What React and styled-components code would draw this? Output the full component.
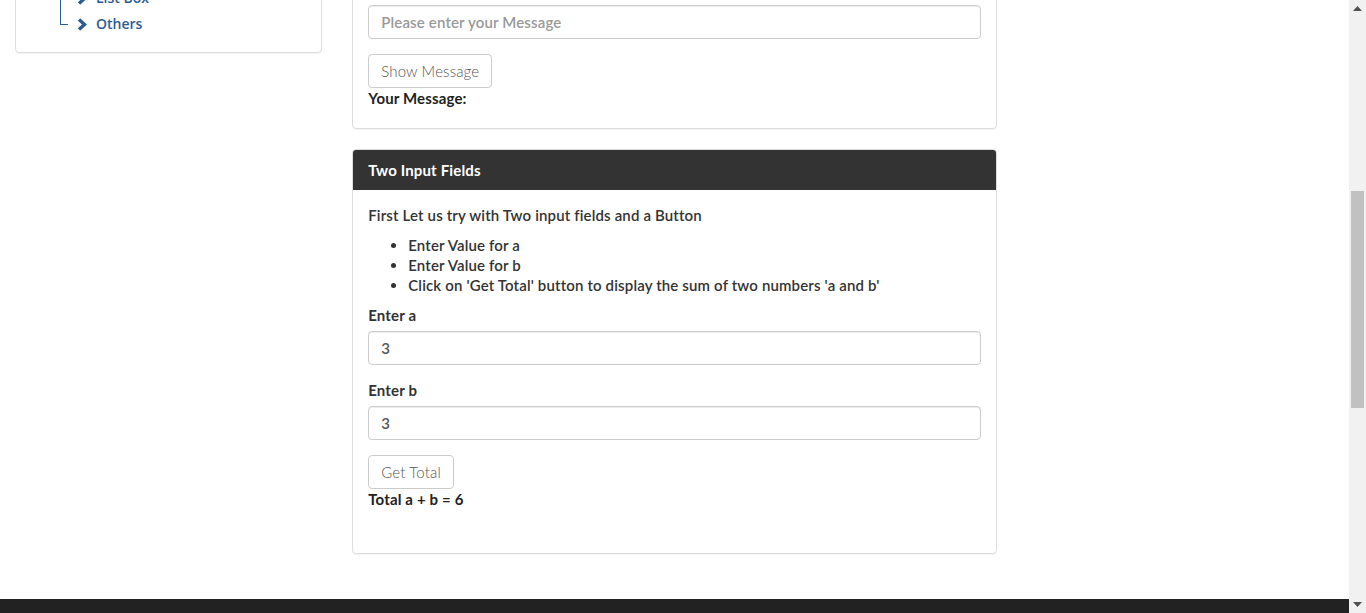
import React, { useLayoutEffect, useRef } from 'react';
import styled, { createGlobalStyle } from 'styled-components';

const GlobalStyle = createGlobalStyle`
  html, body {
    margin: 0;
    padding: 0;
    background: #ffffff;
  }
  body {
    margin-right: 17px;
    font-family: Lato, "Open Sans", sans-serif;
    font-size: 15px;
    letter-spacing: 0.15px;
    line-height: 20px;
    color: #333333;
  }
  * {
    box-sizing: border-box;
  }
`;

const treeItems = ['Input Forms', 'Date pickers', 'Table', 'List Box', 'Others'];

const steps = [
  'Enter Value for a',
  'Enter Value for b',
  "Click on 'Get Total' button to display the sum of two numbers 'a and b'",
];

const Chevron = () => (
  <svg width="10" height="13" viewBox="0 0 10 13">
    <path d="M2 1.5 L7.5 6.5 L2 11.5" fill="none" stroke="#2c5d92" strokeWidth="3.4" />
  </svg>
);

const Arrow = ({ down }) => (
  <svg width="9" height="5" viewBox="0 0 9 5">
    <polygon points={down ? '0,0 9,0 4.5,5' : '0,5 9,5 4.5,0'} fill="#505050" />
  </svg>
);

const App = () => {
  const anchorRef = useRef(null);

  // the shot is taken part way down the page, with the message input near the top
  useLayoutEffect(() => {
    if (anchorRef.current) {
      const top = anchorRef.current.getBoundingClientRect().top + window.scrollY;
      window.scrollTo(0, top - 5);
    }
  }, []);

  return (
    <>
      <GlobalStyle />
      <Header>
        <Brand>Selenium Easy</Brand>
        <PageTitle>Simple Form Demo</PageTitle>
      </Header>
      <Row>
        <Column>
          <SideCard>
            <Tree>
              {treeItems.map((item, i) => (
                <TreeItem key={item} $last={i === treeItems.length - 1}>
                  <Chevron />
                  <TreeLink>{item}</TreeLink>
                </TreeItem>
              ))}
            </Tree>
          </SideCard>
        </Column>
        <Column>
          <Panel>
            <PanelHeading>Single Input Field</PanelHeading>
            <PanelBody $bottom={20}>
              <Text>This would be your first example to start with Selenium.</Text>
              <FormGroup>
                <Label>Enter message</Label>
                <Input ref={anchorRef} type="text" placeholder="Please enter your Message" />
              </FormGroup>
              <Button>Show Message</Button>
              <Result>Your Message:</Result>
            </PanelBody>
          </Panel>
          <Panel>
            <PanelHeading>Two Input Fields</PanelHeading>
            <PanelBody $bottom={44}>
              <Text>First Let us try with Two input fields and a Button</Text>
              <Steps>
                {steps.map(s => (
                  <li key={s}>{s}</li>
                ))}
              </Steps>
              <FormGroup>
                <Label>Enter a</Label>
                <Input type="text" defaultValue="3" />
              </FormGroup>
              <FormGroup>
                <Label>Enter b</Label>
                <Input type="text" defaultValue="3" />
              </FormGroup>
              <Button>Get Total</Button>
              <Result>Total a + b = 6</Result>
            </PanelBody>
          </Panel>
        </Column>
        <Column />
      </Row>
      <Footer>
        <FooterText>© Selenium Easy</FooterText>
      </Footer>
      <ScrollTrack>
        <ScrollButton>
          <Arrow />
        </ScrollButton>
        <ScrollBody>
          <ScrollThumb />
        </ScrollBody>
        <ScrollButton>
          <Arrow down />
        </ScrollButton>
      </ScrollTrack>
    </>
  );
};

const Header = styled.header`
  height: 385px;
  padding: 20px 15px;
  border-bottom: 1px solid #eeeeee;
`;

const Brand = styled.div`
  font-size: 24px;
  line-height: 30px;
  font-weight: 700;
  color: #2c5d92;
`;

const PageTitle = styled.h1`
  margin: 40px 0 0;
  font-size: 28px;
  line-height: 34px;
  font-weight: 600;
`;

const Row = styled.div`
  display: grid;
  grid-template-columns: 3fr 6fr 3fr;
  padding-bottom: 25px;
`;

const Column = styled.div`
  padding: 0 15px;
  min-width: 0;
`;

const SideCard = styled.div`
  border: 1px solid #dddddd;
  border-radius: 4px;
  box-shadow: 0 1px 1px rgba(0, 0, 0, 0.05);
  padding: 13px 0 15px;
`;

const Tree = styled.ul`
  list-style: none;
  margin: 0 0 0 44px;
  padding: 0;
`;

const TreeItem = styled.li`
  position: relative;
  height: 26px;
  display: flex;
  align-items: center;
  gap: 9px;
  padding-left: 17px;

  &::before {
    content: '';
    position: absolute;
    left: 0;
    top: 0;
    height: ${p => (p.$last ? '13px' : '26px')};
    border-left: 1px solid #2c5d92;
  }

  &::after {
    content: '';
    position: absolute;
    left: 0;
    top: 13px;
    width: 8px;
    border-top: 1px solid #2c5d92;
  }
`;

const TreeLink = styled.a`
  font-family: "Open Sans", sans-serif;
  font-size: 14px;
  letter-spacing: 0;
  font-weight: 600;
  color: #2c5d92;
`;

const Panel = styled.div`
  border: 1px solid #dddddd;
  border-radius: 4px;
  box-shadow: 0 1px 1px rgba(0, 0, 0, 0.05);
  margin-bottom: 20px;
  overflow: hidden;
`;

const PanelHeading = styled.div`
  background: #333333;
  color: #ffffff;
  font-weight: 700;
  padding: 10px 15px;
  line-height: 20px;
`;

const PanelBody = styled.div`
  padding: 15px 15px ${p => p.$bottom}px;
`;

const Text = styled.p`
  margin: 0 0 10px;
  font-weight: 600;
`;

const Steps = styled.ul`
  margin: 0 0 10px;
  padding-left: 40px;
  font-weight: 600;
`;

const FormGroup = styled.div`
  margin-bottom: 15px;
`;

const Label = styled.label`
  display: block;
  margin-bottom: 6px;
  font-weight: 700;
`;

const Input = styled.input`
  display: block;
  width: 100%;
  height: 34px;
  padding: 6px 12px;
  font-family: Lato, sans-serif;
  font-size: 15px;
  letter-spacing: 0.15px;
  font-weight: 600;
  color: #555555;
  border: 1px solid #cccccc;
  border-radius: 4px;
  box-shadow: inset 0 1px 1px rgba(0, 0, 0, 0.075);
  outline: none;

  &::placeholder {
    color: #999999;
  }
`;

const Button = styled.button`
  display: block;
  height: 34px;
  padding: 6px 12px;
  font-family: Lato, sans-serif;
  font-size: 15px;
  letter-spacing: 0.15px;
  font-weight: 300;
  color: #555555;
  background: #ffffff;
  border: 1px solid #cccccc;
  border-radius: 4px;
`;

const Result = styled.div`
  font-weight: 700;
  color: #222222;
`;

const Footer = styled.footer`
  background: #222222;
  height: 545px;
  padding: 40px 15px;
`;

const FooterText = styled.p`
  margin: 0;
  color: #999999;
`;

/* the browser's scrollbar, as it shows in the shot */
const ScrollTrack = styled.div`
  position: fixed;
  top: 0;
  right: 0;
  width: 17px;
  height: 100vh;
  background: #f1f1f1;
  display: flex;
  flex-direction: column;
`;

const ScrollButton = styled.div`
  height: 17px;
  display: flex;
  align-items: center;
  justify-content: center;
`;

const ScrollBody = styled.div`
  flex: 1;
  padding: 174px 2px 0;
`;

const ScrollThumb = styled.div`
  height: 217px;
  background: #c1c1c1;
`;

export default App;
